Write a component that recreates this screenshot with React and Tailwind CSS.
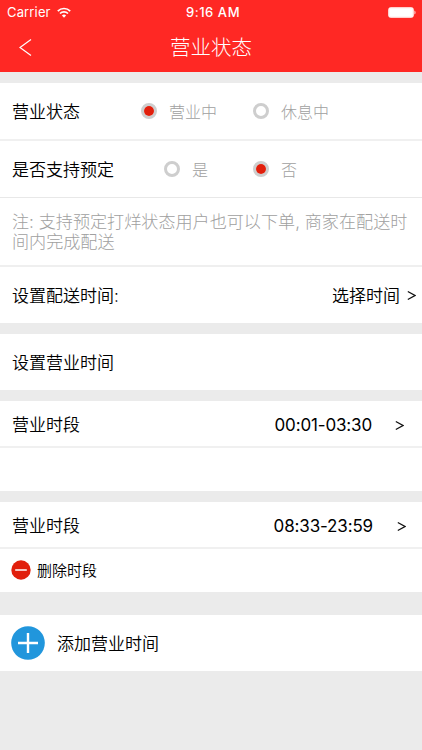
const Radio = ({ checked, label, className }) => (
  <div className={`flex items-center ${className}`}>
    <span className="flex h-4 w-4 items-center justify-center rounded-full border-[3px] border-[#cecece]">
      {checked && <span className="h-[10px] w-[10px] shrink-0 rounded-full bg-[#e11f0c]" />}
    </span>
    <span className="ml-3 pt-0.5 text-base leading-none font-light text-[#a0a0a0]">{label}</span>
  </div>
);

const Arrow = ({ className }) => (
  <svg viewBox="0 0 9 11" className={`h-[11px] w-[9px] ${className}`} fill="none" stroke="#111111" strokeWidth="1.3">
    <path d="M0.8 1.5L8 5.5L0.8 9.5" />
  </svg>
);

const StatusBar = () => (
  <div className="grid h-6 grid-cols-3 items-center px-[7px] text-[13px] leading-none">
    <div className="flex items-center">
      <span className="font-normal tracking-[0.15px]">Carrier</span>
      <svg viewBox="0 0 14 11" className="ml-[6px] h-[11px] w-[14px]" fill="none" stroke="white" strokeWidth="1.7">
        <path d="M0.8 4.1a8.7 8.7 0 0 1 12.4 0" />
        <path d="M3 6.5a5.7 5.7 0 0 1 8 0" />
        <path d="M7 10.8L4.9 8.5a3 3 0 0 1 4.2 0z" fill="white" stroke="none" />
      </svg>
    </div>
    <span className="pl-1 text-center font-medium tracking-[0.55px] whitespace-nowrap">9:16 AM</span>
    <svg viewBox="0 0 28 11" className="-mr-[1px] h-[11px] w-7 justify-self-end">
      <rect x="0.5" y="0.5" width="25" height="10" rx="2.2" fill="white" fillOpacity="0.9" stroke="white" strokeOpacity="0.6" />
      <rect x="1.5" y="1.5" width="23" height="8" rx="1" fill="white" />
      <path d="M26.5 3.5c1.3.5 1.3 3.5 0 4z" fill="white" />
    </svg>
  </div>
);

const PeriodRow = ({ time, timeClass, arrowClass }) => (
  <div className="flex h-[47px] items-center border-b-2 border-[#f0f0f0] pt-[3px] pl-3">
    <span>营业时段</span>
    <span className={`ml-auto font-normal ${timeClass}`}>{time}</span>
    <Arrow className={arrowClass} />
  </div>
);

export default function App() {
  return (
    <div className="h-[750px] w-[422px] overflow-hidden bg-[#ebebeb] font-['Inter','Noto_Sans_CJK_SC',sans-serif] text-[17px] font-[350] leading-none text-black">
      {/* Header */}
      <header className="h-[72px] bg-[#ff2824] text-white">
        <StatusBar />
        <div className="grid h-12 grid-cols-3 items-center">
          <svg viewBox="0 0 13 17" className="mb-[2px] ml-[19px] h-[17px] w-[13px]" fill="none" stroke="white" strokeWidth="1.2">
            <path d="M12 0.5L1 8.5L12 16.5" />
          </svg>
          <h1 className="text-center text-[20.5px] font-light whitespace-nowrap">营业状态</h1>
        </div>
      </header>

      {/* Status */}
      <section className="mt-[11px] bg-white">
        <div className="flex h-[58px] items-center border-b-2 border-[#f0f0f0] pl-3">
          <span className="w-[129px] pt-0.5">营业状态</span>
          <Radio checked label="营业中" className="w-[112px]" />
          <Radio label="休息中" />
        </div>
        <div className="flex h-[57px] items-center border-b border-[#e8e8e8] pl-3">
          <span className="w-[152px] pt-0.5">是否支持预定</span>
          <Radio label="是" className="w-[89px]" />
          <Radio checked label="否" />
        </div>
        <div className="h-[69px] border-b-2 border-[#efefef] pt-[14px] pl-3 text-[17.1px] leading-[19.5px] font-light whitespace-nowrap text-[#a0a0a0]">
          <p>注: 支持预定打烊状态用户也可以下单, 商家在配送时</p>
          <p>间内完成配送</p>
        </div>
        <div className="flex h-14 items-center pr-[6px] pl-3">
          <span className="pt-0.5">设置配送时间:</span>
          <span className="ml-auto pt-0.5">选择时间</span>
          <Arrow className="ml-[7px]" />
        </div>
      </section>

      <section className="mt-[11px] flex h-14 items-center bg-white pt-0.5 pl-3">设置营业时间</section>

      {/* Business hours */}
      <section className="mt-[11px] h-[90px] bg-white">
        <PeriodRow time="00:01-03:30" timeClass="mr-[23px] tracking-[-0.15px]" arrowClass="mr-[18px]" />
      </section>
      <section className="mt-[11px] h-[90px] bg-white">
        <PeriodRow time="08:33-23:59" timeClass="mr-6 tracking-[-0.15px]" arrowClass="mr-4" />
        <div className="flex h-[42px] items-center pl-[11px]">
          <svg viewBox="0 0 20 20" className="h-5 w-5">
            <circle cx="10" cy="10" r="9.7" fill="#e11f0c" />
            <path d="M4.2 10h11.6" stroke="white" strokeWidth="1.5" />
          </svg>
          <span className="ml-[6px] text-[15px]">删除时段</span>
        </div>
      </section>

      <section className="mt-[23px] flex h-14 items-center bg-white pl-[11px]">
        <svg viewBox="0 0 34 34" className="h-[34px] w-[34px]">
          <circle cx="17" cy="17" r="16.8" fill="#2196dc" />
          <path d="M7 17h20M17 7v20" stroke="white" strokeWidth="2.4" />
        </svg>
        <span className="ml-3 pt-0.5">添加营业时间</span>
      </section>
    </div>
  );
}
